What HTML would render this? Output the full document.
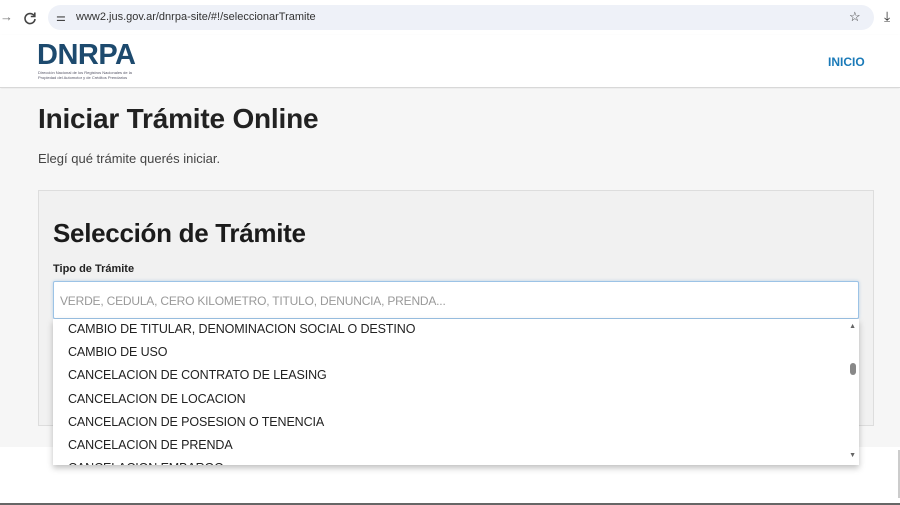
<!DOCTYPE html>
<html><head><meta charset="utf-8"><style>
*{margin:0;padding:0;box-sizing:border-box}
body{width:900px;height:505px;overflow:hidden;position:relative;background:#fff;font-family:"Liberation Sans",sans-serif}
.abs{position:absolute}
</style></head><body>
<div class="abs" style="left:0;top:0;width:900px;height:35px;background:#fff"></div>
<div class="abs" style="left:0;top:9px;color:#777;font-size:13px">→</div>
<svg class="abs" style="left:23px;top:11px" width="14" height="14" viewBox="0 0 14 14"><path d="M11 4.5A5 5 0 1 0 12 8" fill="none" stroke="#444" stroke-width="1.6"/><path d="M11.8 1.5v4h-4" fill="none" stroke="#444" stroke-width="1.6"/></svg>
<div class="abs" style="left:48px;top:5px;width:826px;height:25px;border-radius:13px;background:#eef1f8"></div>
<div class="abs" style="left:56px;top:11px;font-size:11px;color:#444">⚌</div>
<div class="abs" style="left:76px;top:11px;font-size:11px;color:#333">www2.jus.gov.ar/dnrpa-site/#!/seleccionarTramite</div>
<div class="abs" style="left:849px;top:9px;font-size:13px;color:#333">☆</div>
<div class="abs" style="left:884px;top:8px;font-size:14px;color:#333">⤓</div>
<div class="abs" style="left:0;top:35px;width:900px;height:53px;background:#fff;border-bottom:1px solid #d8d8d8;box-shadow:0 1px 2px rgba(0,0,0,.1)"></div>
<div class="abs" style="left:37px;top:39px;font-size:29px;font-weight:bold;color:#1d4a6e;letter-spacing:-0.5px">DNRPA</div>
<div class="abs" style="left:38px;top:70px;font-size:4px;line-height:5px;color:#556;width:100px">Dirección Nacional de los Registros Nacionales de la Propiedad del Automotor y de Créditos Prendarios</div>
<div class="abs" style="left:828px;top:55px;font-size:12px;font-weight:bold;color:#1a7ab8">INICIO</div>
<div class="abs" style="left:0;top:89px;width:900px;height:358px;background:#f6f6f6"></div>
<div class="abs" style="left:38px;top:103px;font-size:28px;font-weight:bold;color:#222;letter-spacing:-0.2px">Iniciar Trámite Online</div>
<div class="abs" style="left:38px;top:151px;font-size:13px;color:#444">Elegí qué trámite querés iniciar.</div>
<div class="abs" style="left:38px;top:190px;width:836px;height:236px;background:#f1f1f1;border:1px solid #ddd"></div>
<div class="abs" style="left:53px;top:218px;font-size:26px;font-weight:bold;color:#1b1b1b;letter-spacing:-0.3px">Selección de Trámite</div>
<div class="abs" style="left:53px;top:263px;font-size:11px;font-weight:bold;color:#222">Tipo de Trámite</div>
<div class="abs" style="left:53px;top:281px;width:806px;height:38px;background:#fff;border:1px solid #9cc3e6;border-radius:2px;box-shadow:0 0 3px rgba(100,160,220,.4)"></div>
<div class="abs" style="left:60px;top:294px;font-size:12px;color:#999;letter-spacing:-0.2px">VERDE, CEDULA, CERO KILOMETRO, TITULO, DENUNCIA, PRENDA...</div>
<div class="abs" style="left:53px;top:319px;width:806px;height:146px;background:#fff;box-shadow:0 3px 6px rgba(0,0,0,.25);overflow:hidden">
<div style="position:absolute;left:15px;top:-1px;font-size:12.5px;color:#222;line-height:23.2px;letter-spacing:-0.1px">CAMBIO DE TITULAR, DENOMINACION SOCIAL O DESTINO<br>CAMBIO DE USO<br>CANCELACION DE CONTRATO DE LEASING<br>CANCELACION DE LOCACION<br>CANCELACION DE POSESION O TENENCIA<br>CANCELACION DE PRENDA<br>CANCELACION EMBARGO</div>
<div style="position:absolute;right:0;top:0;width:13px;height:146px;background:#fff"></div>
<div style="position:absolute;right:3px;top:4px;font-size:7px;color:#666">▲</div>
<div style="position:absolute;right:3px;top:44px;width:6px;height:12px;border-radius:3px;background:#888"></div>
<div style="position:absolute;right:3px;top:133px;font-size:7px;color:#666">▼</div>
</div>
<div class="abs" style="left:898px;top:450px;width:2px;height:48px;background:#ccc"></div>
<div class="abs" style="left:0;top:503px;width:900px;height:2px;background:#666"></div>
</body></html>
